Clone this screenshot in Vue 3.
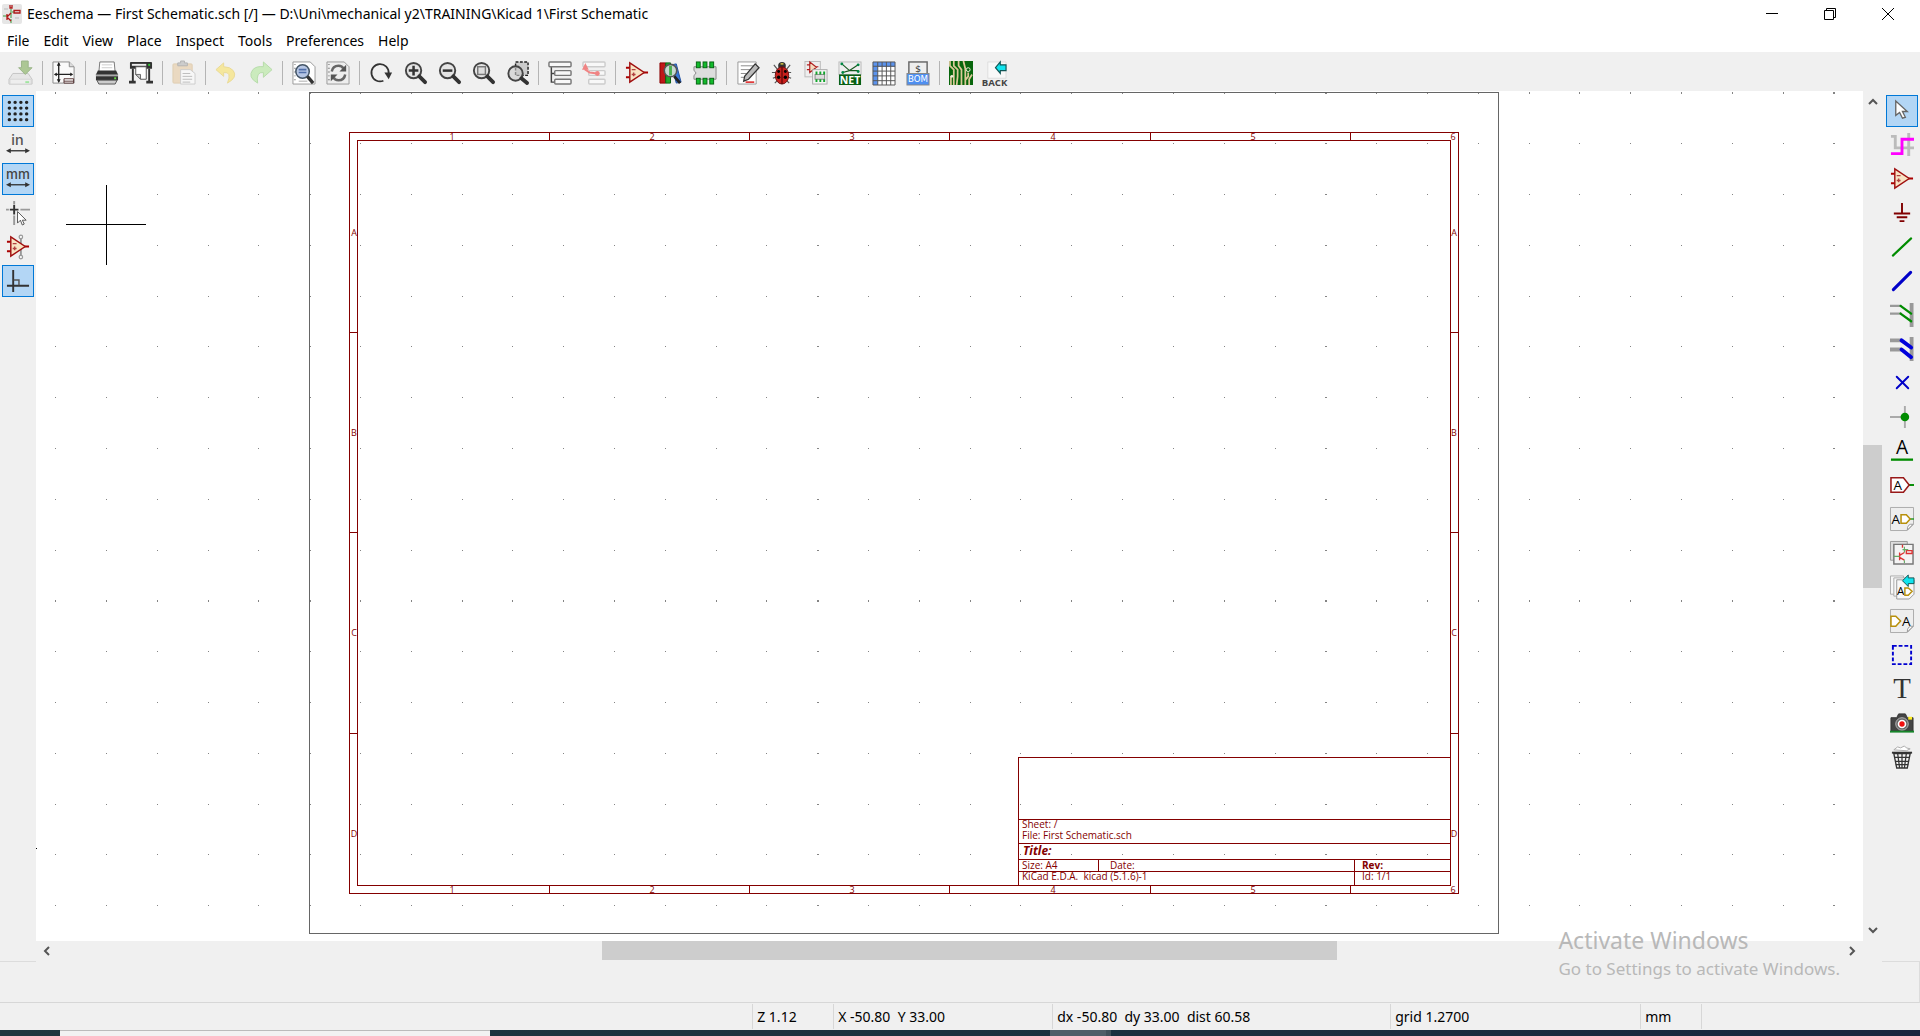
<script setup>
const sheetPaper = '<path d="M1 1H18L23 6V23H1Z" fill="#fafafa" stroke="#8a8a8a"/><path d="M18 1V6H23" fill="#ddd" stroke="#8a8a8a"/>'
const lens = '<circle cx="11" cy="10" r="8" fill="#e4e4e4" stroke="#444" stroke-width="2"/><path d="M17 16L23 22" stroke="#333" stroke-width="4" stroke-linecap="round"/>'
const opamp = '<path d="M1 7H6M1 17H6M19 12H24" stroke="#a00" stroke-width="2"/><path d="M5 2V22L20 12Z" fill="#f8e4c4" stroke="#a01010" stroke-width="1.5"/><path d="M7 9H11M7 14H11M9 12V16" stroke="#b04040" stroke-width="1.5"/>'
const cursor = '<path d="M6 2V17L10 14L13 20L16 19L13 13H18Z" fill="#fff" stroke="#666" stroke-width="1.4"/>'
const corner = '<path d="M0.5 0.5H24.5V18L18 24.5H0.5Z" fill="#eee" stroke="#aaa"/><path d="M24 18Q18 17 18 24Z" fill="#fff" stroke="#999"/>'

const icons = {
  save: '<g opacity=".5"><path d="M4 13H20L24 19V24H0V19Z" fill="#ddd" stroke="#999"/><path d="M1 19H23V24H1Z" fill="#eee" stroke="#bbb"/><path d="M13 0H20V7H24L17 14L10 7H13Z" fill="#6a9f3a" stroke="#477a25"/><path d="M17 22H21" stroke="#5d5" stroke-width="2"/></g>',
  page: sheetPaper + '<path d="M3 14H21M7 2V22" stroke="#222" stroke-width="1.4"/><path d="M2 14L5 12V16ZM22 14L19 12V16ZM7 1L5 5H9ZM7 23L5 19H9Z" fill="#222"/><path d="M12.5 18.5H22.5V23H12.5ZM12.5 21H22.5" fill="#fff" stroke="#533"/>',
  print: '<path d="M5 1H20L21 12H4Z" fill="#fff" stroke="#777"/><path d="M7 4H18M7 7H18" stroke="#ccc"/><path d="M3 10H22L24 14V20H1V14Z" fill="#333"/><path d="M1 15H24" stroke="#aaa" stroke-width="2"/><path d="M2 20H23L21 24H4Z" fill="#ccc" stroke="#555"/><path d="M20 18H22" stroke="#6d4" stroke-width="2"/>',
  plot: '<path d="M1 2Q1 1 2 1H23Q24 1 24 2V8H1Z" fill="#333"/><path d="M3 4H18" stroke="#eee" stroke-width="2"/><path d="M20 4H22" stroke="#3c3" stroke-width="2"/><path d="M4 8V21M21 8V21" stroke="#333" stroke-width="2"/><path d="M0 22H7M18 22H25" stroke="#333" stroke-width="3"/><path d="M7 6H18V19H12L7 14Z" fill="#fff" stroke="#555"/><path d="M7 14H12V19Z" fill="#ccc" stroke="#666"/>',
  paste: '<g opacity=".5"><rect x="1" y="3" width="20" height="20" rx="1" fill="#e6c494" stroke="#d0ac74"/><path d="M6 5V2H9V0H13V2H16V5Z" fill="#aaa" stroke="#777"/><path d="M9 9H19L24 13V24H9Z" fill="#fff" stroke="#aaa"/><path d="M11 13H19M11 16H21M11 19H21M11 22H19" stroke="#888"/></g>',
  undo: '<g opacity=".5"><path d="M9 2L1 9L9 16V12Q18 11 13 23Q24 17 19 10Q16 6 9 6Z" fill="#fbe04c" stroke="#e4c440"/></g>',
  redo: '<g opacity=".5"><path d="M15 1L24 9L15 17V12Q7 11 9 23Q-2 17 4 9Q8 5 15 6Z" fill="#a8e88c" stroke="#7cc864"/></g>',
  find: '<path d="M1 1H19L24 6V24H1Z" fill="#fff" stroke="#999"/><path d="M3 3V22" stroke="#999" stroke-dasharray="1 3" stroke-width="2"/><path d="M7 5H16M7 21H16" stroke="#aaa"/><circle cx="11" cy="11" r="7" fill="#b6c6e4" stroke="#456" stroke-width="1.6"/><path d="M7 9H15M7 12H15" stroke="#5270aa" stroke-width="1.6"/><path d="M16 16L22 23" stroke="#333" stroke-width="3.5"/>',
  replace: '<path d="M1 1H19L24 6V24H1Z" fill="#eee" stroke="#999"/><path d="M3 3V22" stroke="#888" stroke-dasharray="1 3" stroke-width="2"/><path d="M6 11Q7 5 13 5Q17 5 18 8M20 14Q19 20 13 20Q9 20 8 17" fill="none" stroke="#666" stroke-width="2.6"/><path d="M21 4V11H14ZM5 21V14H12Z" fill="#555"/>',
  refresh: '<path d="M15 20.5A9 9 0 1 1 20.5 13" fill="none" stroke="#333" stroke-width="1.8"/><path d="M16 12H24L20.5 19Z" fill="#333"/>',
  zoomIn: lens + '<path d="M6 10H16M11 5V15" stroke="#333" stroke-width="2.6"/>',
  zoomOut: lens + '<path d="M6 10H16" stroke="#333" stroke-width="2.6"/>',
  zoomFit: lens + '<rect x="7" y="6" width="8" height="8" fill="#ddd" stroke="#777" stroke-width="1.5"/>',
  zoomArea: '<path d="M11 1H24V15H11Z" fill="#ccc" stroke="#222" stroke-width="1.5" stroke-dasharray="3 1.5"/><circle cx="11" cy="13" r="7.5" fill="#ccc" fill-opacity=".6" stroke="#444" stroke-width="2"/><path d="M17 18L23 23" stroke="#333" stroke-width="4" stroke-linecap="round"/>',
  tree: '<path d="M3.5 6V22H8M3.5 13H8" fill="none" stroke="#444" stroke-width="1.5"/><g fill="#f8f8f8" stroke="#777" stroke-width="1.5"><rect x="1" y="1" width="23" height="5" rx="1"/><rect x="7" y="10" width="17" height="5" rx="1"/><rect x="7" y="19" width="17" height="5" rx="1"/></g>',
  leave: '<g fill="#f8f8f8" stroke="#ccc" stroke-width="1.5"><rect x="1" y="1" width="23" height="5" rx="1"/><rect x="7" y="10" width="17" height="5" rx="1"/><rect x="7" y="19" width="17" height="5" rx="1"/></g><path d="M16 13L8 12L3.5 9V5" fill="none" stroke="#f08484" stroke-width="2"/><path d="M3.5 2L0 9H7Z" fill="#f08484"/><circle cx="16" cy="13" r="2.5" fill="#f08484"/>',
  opamp,
  library: '<path d="M1 2H7V23H1Z" fill="#c01818" stroke="#800"/><path d="M7 2H12V23H7Z" fill="#22a82c" stroke="#0a6010"/><path d="M13 4L18 3L23 22L18 23Z" fill="#3a78d8" stroke="#1f4fa0"/><circle cx="12" cy="10" r="6.5" fill="#c8d8d0" stroke="#555" stroke-width="1.6"/><path d="M12 5V15" stroke="#4ab050" stroke-width="3"/><path d="M16 16L22 23" stroke="#222" stroke-width="3"/>',
  footprint: '<path d="M1 6H24V19H1V15Q5 12.5 1 10Z" fill="#ddd" stroke="#888"/><g fill="#12bb2c" stroke="#076514"><rect x="3.5" y="1" width="4" height="6"/><rect x="10.5" y="1" width="4" height="6"/><rect x="17.5" y="1" width="4" height="6"/><rect x="3.5" y="18" width="4" height="6"/><rect x="10.5" y="18" width="4" height="6"/><rect x="17.5" y="18" width="4" height="6"/></g>',
  annotate: '<path d="M2 1H21V24H2Z" fill="#fff" stroke="#999"/><path d="M5 5H18M5 9H15M5 13H11M5 17H9" stroke="#888"/><path d="M10 22H19" stroke="#d22" stroke-width="1.6"/><path d="M20 3L24 7L13 19L8 21L9 16Z" fill="#bbb" stroke="#333" stroke-width="1.3"/>',
  bug: '<path d="M4 4L8 9M21 4L17 9M2 12H22M3 18L8 16M22 18L17 16M5 23L9 19M20 23L16 19" stroke="#555" stroke-width="1.2"/><circle cx="12.5" cy="5" r="4" fill="#333"/><path d="M11 3H14" stroke="#dc4" stroke-width="1.5"/><ellipse cx="12.5" cy="15" rx="7" ry="9" fill="#c8201c" stroke="#611"/><path d="M12.5 6V24" stroke="#400"/><circle cx="9" cy="11" r="1.5"/><circle cx="16" cy="11" r="1.5"/><circle cx="9" cy="17" r="1.8"/><circle cx="16" cy="17" r="1.8"/>',
  assign: '<rect x="1" y="0.5" width="16" height="16" fill="#eee" stroke="#bbb"/><path d="M3 4H6M3 9H6M12 6H15M6 1V12L13 6.5Z" fill="#f4dcc0" stroke="#b02020" stroke-width="1.2"/><rect x="9" y="9" width="15" height="15" fill="#f4f4f4" stroke="#aaa"/><rect x="11.5" y="14" width="10" height="5" fill="#ddd" stroke="#888"/><path d="M12 12.5H22M12 20.5H22" stroke="#12a52c" stroke-width="3" stroke-dasharray="2 2"/>',
  net: '<rect x="1" y="1" width="23" height="13" fill="#eee" stroke="#bbb"/><path d="M4 3L12 10L21 4M12 10L5 12M12 10H21" fill="none" stroke="#175a20" stroke-width="1.2"/><g fill="#084"><circle cx="4" cy="3" r="1.5"/><circle cx="21" cy="4" r="1.5"/><circle cx="5" cy="12" r="1.5"/><circle cx="21" cy="11" r="1.5"/></g><rect x="1" y="14" width="23" height="11" fill="#085f14"/><text x="12.5" y="23.5" font-size="11" font-weight="700" font-family="Open Sans, sans-serif" text-anchor="middle" fill="#fff">NET</text>',
  table: '<rect x="1" y="1" width="23" height="24" fill="#fff"/><path d="M1 1H24V6H1ZM1 1H6V25H1Z" fill="#5b93ee"/><path d="M1 1H24V25H1ZM1 5.5H24M1 10.5H24M1 15.5H24M1 20.5H24M6 1V25M10.5 1V25M15 1V25M19.5 1V25" fill="none" stroke="#555"/>',
  bom: '<rect x="3" y="1" width="19" height="13" fill="#eee" stroke="#666" stroke-width="1.5"/><text x="12.5" y="11" font-size="10" font-family="DejaVu Sans, sans-serif" text-anchor="middle" fill="#333">$</text><rect x="1" y="13" width="23" height="12" fill="#4f8ff0" stroke="#888"/><text x="12.5" y="22" font-size="9" font-family="DejaVu Sans, sans-serif" text-anchor="middle" fill="#fff">BOM</text>',
  pcb: '<rect width="25" height="25" fill="#08660c"/><path d="M1 0V5L5 9V25M5 0V5L9 9V16L8 25M10 0V5L13 9V25M15 0L17 8V25M20 12V16L17 20M24 14L21 19V25M2 16V25" fill="none" stroke="#dcc99a" stroke-width="1.8"/><circle cx="20" cy="9" r="2" fill="#08660c" stroke="#eed"/><circle cx="3" cy="16" r="1.5" fill="#eed"/>',
  back: '<path d="M5 1H24V18H5Z" fill="#f8f8f8" stroke="#ddd"/><path d="M13 7L18 1V4H24V10H18V13Z" fill="#10e4ee" stroke="#155" stroke-width="1.2"/><text x="12" y="26" font-size="10" font-weight="700" font-family="Open Sans, sans-serif" text-anchor="middle" fill="#444">BACK</text>',
  grid: '<path d="M3.5 3.5H22M3.5 9.5H22M3.5 15.5H22M3.5 21.5H22" stroke="#222" stroke-width="3.6" stroke-linecap="round" stroke-dasharray="0 6"/>',
  inch: '<text x="12" y="13" font-size="15" font-weight="500" font-family="Inter, sans-serif" text-anchor="middle" fill="#555">in</text><path d="M3 18.5H22" stroke="#333" stroke-width="1.4"/><path d="M0 18.5L5 16V21ZM25 18.5L20 16V21Z" fill="#333"/>',
  mm: '<text x="12.5" y="13" font-size="14" font-weight="500" font-family="Inter, sans-serif" text-anchor="middle" fill="#444">mm</text><path d="M3 18.5H22" stroke="#333" stroke-width="1.4"/><path d="M0 18.5L5 16V21ZM25 18.5L20 16V21Z" fill="#333"/>',
  cross: '<path d="M0 9H3M15 9H25M8.5 0V3M8.5 15V25" stroke="#999" stroke-width="2"/><path d="M4 9H13M8.5 4V14" stroke="#333" stroke-width="2"/><path d="M12 11V23L15 20L17 25L19 24L17 20H21Z" fill="#fff" stroke="#555"/>',
  hidden: '<path d="M15.5 3V22" stroke="#999" stroke-width="2"/>' + opamp + '<g fill="#fff" stroke="#999" stroke-width="1.3"><circle cx="15.5" cy="2" r="1.8"/><circle cx="15.5" cy="23" r="1.8"/></g>',
  ortho: '<path d="M7.5 1V24M1 17.5H24" stroke="#333" stroke-width="2"/><path d="M8 11.5H13.5V17" fill="none" stroke="#555" stroke-width="1.5"/>',
  select: cursor,
  highlight: '<path d="M1 3.5H5.5V15.5H25M19.5 0V24" fill="none" stroke="#bbb" stroke-width="3"/><path d="M1 21.5H12.5V6.5H25" fill="none" stroke="#f0f" stroke-width="3"/>',
  power: '<path d="M12.5 2V13" stroke="#800000" stroke-width="2"/><path d="M4 13H21M7 17H18M10 21H15" stroke="#800000" stroke-width="2"/>',
  wire: '<path d="M3 21.5L22 3.5" stroke="#008c00" stroke-width="2.2" stroke-linecap="round"/>',
  bus: '<path d="M3.5 21.5L21.5 3.5" stroke="#0000c8" stroke-width="3.2" stroke-linecap="round"/>',
  wireEntry: '<path d="M0 3H12M0 11H12" stroke="#999" stroke-width="2.4"/><path d="M22.5 0V25" stroke="#999" stroke-width="4"/><path d="M11 3L22 11M11 11L22 19" stroke="#008c00" stroke-width="2.4" stroke-linecap="round"/>',
  busEntry: '<path d="M0 3.5H12M0 13H12" stroke="#999" stroke-width="4"/><path d="M22.5 0V25" stroke="#999" stroke-width="4"/><path d="M12 3.5L22 11M12 13L22 21" stroke="#0000dc" stroke-width="4" stroke-linecap="round"/>',
  noConnect: '<path d="M7 6L19 18M19 6L7 18" stroke="#0000c8" stroke-width="2" stroke-linecap="round"/>',
  junction: '<path d="M0 12.5H13M15.5 1V24" stroke="#aaa" stroke-width="2"/><circle cx="15.5" cy="12.5" r="4.5" fill="#008c00"/>',
  label: '<text x="12.5" y="16" font-size="20" font-family="Open Sans, sans-serif" text-anchor="middle">A</text><path d="M1 21.5H24" stroke="#008c00" stroke-width="2.4"/>',
  globalLabel: '<path d="M19 12.5H25" stroke="#008c00" stroke-width="2"/><path d="M1 5H14L20 12.5L14 20H1Z" fill="#fff" stroke="#981818" stroke-width="1.6"/><text x="8" y="17.5" font-size="14" font-family="Open Sans, sans-serif" text-anchor="middle">A</text>',
  hierLabel: corner + '<text x="6" y="17.5" font-size="14" font-family="Open Sans, sans-serif" text-anchor="middle">A</text><path d="M20 12.5H25" stroke="#292" stroke-width="1.5"/><path d="M11.5 8H17L21 12.5L17 17H11.5Z" fill="#fff" stroke="#b8900c" stroke-width="1.6"/>',
  sheet: '<path d="M0.5 0.5H18V20H0.5Z" fill="#ddd" stroke="#999"/><path d="M4 3.5H24V24H4Z" fill="#f4f4f4" stroke="#777" stroke-width="1.5"/><path d="M17 10H23V13H17ZM10 12V20M10 15L15 12M10 17L15 20M13 4V7" fill="none" stroke="#d33" stroke-width="1.4"/><path d="M4 16H10M15 12V6M15 20V23M13 9H19" stroke="#6a6" stroke-width="1.2"/>',
  importPin: '<path d="M0.5 1H14V20H0.5Z" fill="#f8f8f8" stroke="#aaa"/><path d="M4 3H18V22H4Z" fill="#f8f8f8" stroke="#aaa"/><path d="M7 5H25V20L20 25H7Z" fill="#f8f8f8" stroke="#999"/><path d="M13 6L19 0V3H25V9H19V12Z" fill="#10e4ee" stroke="#155"/><text x="11" y="21" font-size="12" font-family="Open Sans, sans-serif" text-anchor="middle">A</text><path d="M15.5 13.5H19L23 17L19 21H15.5Z" fill="#fff" stroke="#b8900c" stroke-width="1.5"/>',
  sheetPin: corner + '<path d="M1 7.5H6L11 12.5L6 18H1Z" fill="#fff" stroke="#b8900c" stroke-width="1.6"/><text x="17" y="17.5" font-size="14" font-family="Open Sans, sans-serif" text-anchor="middle">A</text>',
  dashed: '<path d="M3 3H22V22H3Z" fill="none" stroke="#0000d0" stroke-width="2" stroke-dasharray="4 2"/>',
  text: '<text x="12.5" y="22" font-size="30" font-family="Liberation Serif, serif" text-anchor="middle" fill="#333">T</text>',
  image: '<path d="M1 7H7L9 3H16L18 7H24V21H1Z" fill="#444" stroke="#333"/><path d="M19 6H23V9H19Z" fill="#fe2"/><circle cx="12.5" cy="13.5" r="6.5" fill="#666" stroke="#bbb"/><circle cx="12.5" cy="13.5" r="4.5" fill="#fff"/><circle cx="12.5" cy="13.5" r="2.8" fill="#f01010"/><path d="M0 21.5H25" stroke="#16862a" stroke-width="2"/>',
  trash: '<path d="M4 5L8 2L11 3L15 1L17 3L21 4L17 6Z" fill="#fff" stroke="#aaa"/><path d="M2 8H23" stroke="#333" stroke-width="2"/><path d="M4 9L7 24H18L21 9Z" fill="#f4f4f4" stroke="#333" stroke-width="1.4"/><path d="M8 9L10 24M12.5 9V24M17 9L15 24M5 13H20M6 17H19M6 20.5H19" stroke="#333" stroke-width="1.3"/>',
}

const menus = ['File', 'Edit', 'View', 'Place', 'Inspect', 'Tools', 'Preferences', 'Help']
const groups = [
  ['save'], ['page'], ['print', 'plot'], ['paste'], ['undo', 'redo'], ['find', 'replace'],
  ['refresh', 'zoomIn', 'zoomOut', 'zoomFit', 'zoomArea'], ['tree', 'leave'],
  ['opamp', 'library', 'footprint'], ['annotate', 'bug', 'assign', 'net', 'table', 'bom'], ['pcb', 'back'],
]
const leftTools = ['grid', 'inch', 'mm', 'cross', 'hidden', 'ortho']
const leftActive = ['grid', 'mm', 'ortho']
const rightTools = [
  'select', 'highlight', 'opamp', 'power', 'wire', 'bus', 'wireEntry', 'busEntry', 'noConnect', 'junction',
  'label', 'globalLabel', 'hierLabel', 'sheet', 'importPin', 'sheetPin', 'dashed', 'text', 'image', 'trash',
]
const product = 'KiCad E.D.A.  kicad (5.1.6)-1'

const dots = []
for (let r = 0; r < 17; r++) {
  for (let c = 0; c < 36; c++) {
    dots.push({
      x: Math.floor(19.6 + c * 50.81),
      y: Math.round(1.4 + r * 50.8),
      w: c % 10 === 5 ? 2 : 1,
      h: r % 10 === 0 ? 2 : 1,
    })
  }
}
const columns = [1, 2, 3, 4, 5, 6].map((n, i) => ({ n, x: 416 + Math.round(i * 200.2), tick: 513 + Math.round(i * 200.2) }))
const rows = ['A', 'B', 'C', 'D'].map((n, i) => ({ n, y: 142 + Math.round(i * 200.2), tick: 241 + Math.round(i * 200.4) }))
</script>

<template>
  <div class="window">
    <header class="title">
      <svg class="logo" viewBox="0 0 20 20" aria-hidden="true">
        <rect width="20" height="20" rx="2" fill="#e6e6e6" />
        <path d="M9 5V14M1 12H6M10 8H13M9 15V19" stroke="#3a9a3a" fill="none" />
        <path d="M5 10V16M5 13L9 9M5 13L9 17M8 1V4H10V1M12 6.500H18V9H12Z" stroke="#b01818" stroke-width="1.3" fill="none" />
        <path d="M2 5H6M13 14H17" stroke="#bbb" />
      </svg>
      <h1>Eeschema — First Schematic.sch [/] — D:\Uni\mechanical y2\TRAINING\Kicad 1\First Schematic</h1>
      <div class="controls">
        <button aria-label="Minimize"><svg viewBox="0 0 12 12"><path d="M0 5.5H12" /></svg></button>
        <button aria-label="Restore"><svg viewBox="0 0 12 12"><path d="M0.5 2.5H9.5V11.5H0.5ZM2.5 2.5V0.5H11.5V9.5H9.5" /></svg></button>
        <button aria-label="Close"><svg viewBox="0 0 12 12"><path d="M0 0L12 12M12 0L0 12" /></svg></button>
      </div>
    </header>

    <nav class="menu"><button v-for="m in menus" :key="m">{{ m }}</button></nav>

    <div class="toolbar">
      <div v-for="(g, i) in groups" :key="i" class="group">
        <button v-for="name in g" :key="name" class="tool" :aria-label="name">
          <svg viewBox="0 0 25 25" v-html="icons[name]"></svg>
        </button>
      </div>
    </div>

    <main class="work">
      <div class="side">
        <button v-for="name in leftTools" :key="name" class="tool" :class="{ on: leftActive.includes(name) }" :aria-label="name">
          <svg viewBox="0 0 25 25" v-html="icons[name]"></svg>
        </button>
      </div>

      <div class="editor">
        <svg class="canvas" shape-rendering="crispEdges">
          <g fill="#848484">
            <rect v-for="(d, i) in dots" :key="i" :x="d.x" :y="d.y" :width="d.w" :height="d.h" />
          </g>
          <rect x="273.5" y="1.5" width="1189" height="841" fill="none" stroke="#666" />
          <g fill="none" stroke="#840000">
            <rect x="313.5" y="41.5" width="1109" height="761" />
            <rect x="321.5" y="49.5" width="1093" height="745" />
            <path v-for="c in columns.slice(0, 5)" :key="c.n" :d="`M${c.tick}.5 41V49M${c.tick}.5 794V802`" />
            <path v-for="r in rows.slice(0, 3)" :key="r.n" :d="`M313 ${r.tick}.5H321M1414 ${r.tick}.5H1422`" />
            <path d="M982.5 794V666.5H1414M982 728.5H1414M982 752.5H1414M982 768.5H1414M982 780.5H1414M1062.5 768V780M1318.5 768V794" />
          </g>
          <g class="ref">
            <template v-for="c in columns" :key="c.n">
              <text :x="c.x" y="49">{{ c.n }}</text>
              <text :x="c.x" y="802">{{ c.n }}</text>
            </template>
            <template v-for="r in rows" :key="r.n">
              <text x="318" :y="r.y + 3">{{ r.n }}</text>
              <text x="1418" :y="r.y + 3">{{ r.n }}</text>
            </template>
          </g>
          <g class="block">
            <text x="986" y="737">Sheet: /</text>
            <text x="986" y="748">File: First Schematic.sch</text>
            <text x="987" y="764" class="heading">Title:</text>
            <text x="986" y="778">Size: A4</text>
            <text x="1074" y="778">Date:</text>
            <text x="1326" y="778" class="strong">Rev:</text>
            <text x="986" y="789">{{ product }}</text>
            <text x="1326" y="789">Id: 1/1</text>
          </g>
          <path d="M30 133.5H110M70.5 94V174M0 757.5H1" stroke="#000" />
        </svg>
        <div class="vbar">
          <button aria-label="Scroll up"><svg viewBox="0 0 10 10"><path d="M1 7L5 3L9 7" /></svg></button>
          <div class="track"><div class="thumb"></div></div>
          <button aria-label="Scroll down"><svg viewBox="0 0 10 10"><path d="M1 3L5 7L9 3" /></svg></button>
        </div>
        <div class="hbar">
          <button aria-label="Scroll left"><svg viewBox="0 0 10 10"><path d="M7 1L3 5L7 9" /></svg></button>
          <div class="track"><div class="thumb"></div></div>
          <button aria-label="Scroll right"><svg viewBox="0 0 10 10"><path d="M3 1L7 5L3 9" /></svg></button>
        </div>
      </div>

      <div class="side right">
        <button v-for="name in rightTools" :key="name" class="tool" :class="{ on: name === 'select' }" :aria-label="name">
          <svg viewBox="0 0 25 25" v-html="icons[name]"></svg>
        </button>
      </div>
    </main>

    <div class="messages"></div>

    <footer class="status">
      <span class="rest"></span>
      <span class="zoom">Z 1.12</span>
      <span class="pos">X -50.80&nbsp; Y 33.00</span>
      <span class="delta">dx -50.80&nbsp; dy 33.00&nbsp; dist 60.58</span>
      <span class="gridsize">grid 1.2700</span>
      <span class="unit">mm</span>
      <span class="tail"></span>
    </footer>
    <div class="taskbar"><i class="search"></i><i class="running"></i></div>

    <aside class="watermark">
      <strong>Activate Windows</strong>
      <span>Go to Settings to activate Windows.</span>
    </aside>
  </div>
</template>

<style>
body { margin: 0; }
</style>

<style scoped>
.window {
  position: relative;
  display: flex;
  flex-direction: column;
  min-height: 100vh;
  background: #f0f0f0;
  color: #000;
  font: 14px/20px "Noto Sans", "Open Sans", sans-serif;
}
button {
  display: flex;
  align-items: center;
  justify-content: center;
  padding: 0;
  border: 0;
  background: none;
  color: inherit;
  font: inherit;
}
.title { display: flex; align-items: center; height: 28px; padding-right: 3px; background: #fff; }
.logo { width: 20px; height: 20px; margin: 0 5px 0 2px; }
h1 { flex: 1; margin: 0; font-size: 14px; font-weight: 400; line-height: 22px; white-space: nowrap; }
.controls { display: flex; }
.controls button { width: 58px; height: 28px; }
.controls svg { width: 12px; height: 12px; fill: none; stroke: #000; overflow: visible; }
.menu { display: flex; height: 24px; background: #fff; }
.menu button { padding: 2px 7px 0; }
.toolbar { display: flex; align-items: center; box-sizing: border-box; height: 39px; padding: 2px 0 0 4px; }
.group { display: flex; }
.group + .group::before { content: ""; width: 1px; margin: 4px; background: #b4b4b4; }
.tool { box-sizing: border-box; width: 34px; height: 32px; }
.tool svg { width: 24px; height: 24px; overflow: visible; }
.work { flex: 1; display: flex; min-height: 0; }
.side { display: flex; flex-direction: column; gap: 2px; box-sizing: border-box; width: 36px; padding: 4px 2px; border-bottom: 1px solid #dcdcdc; }
.side.right { width: 38px; padding: 4px; }
.side .tool { width: 32px; border: 1px solid transparent; }
.side .on { border-color: #0078d7; background: #b3d6f5; }
.editor { flex: 1; display: grid; grid-template: 1fr 21px / 1fr 19px; min-width: 0; }
.canvas { width: 100%; height: 100%; min-height: 850px; background: #fff; }
.canvas text { fill: #840000; font-family: "Open Sans", sans-serif; white-space: pre; }
.ref text { font-size: 9px; text-anchor: middle; }
.block text { font-size: 10px; }
.canvas .strong { font-weight: 700; }
.canvas .heading { font-size: 12px; font-weight: 700; font-style: italic; }
.vbar, .hbar { display: flex; }
.vbar { flex-direction: column; }
.vbar button { height: 22px; }
.hbar button { width: 22px; }
.hbar { height: 19px; }
.vbar svg, .hbar svg { width: 10px; height: 10px; fill: none; stroke: #555; stroke-width: 2; }
.track { flex: 1; display: flex; }
.vbar .track { flex-direction: column; }
.vbar .track::before { content: ""; flex: 332; }
.vbar .track::after { content: ""; flex: 331; }
.vbar .thumb { flex: 143; background: #cdcdcd; }
.hbar .track::before { content: ""; flex: 544; }
.hbar .track::after { content: ""; flex: 504; }
.hbar .thumb { flex: 735; background: #cdcdcd; }
.messages { height: 40px; border-right: 1px solid #dcdcdc; border-bottom: 1px solid #d7d7d7; }
.status { display: flex; height: 25px; padding: 1px 0; }
.status span { box-sizing: border-box; padding: 3px 0 0 4px; white-space: pre; }
.status span + span { border-left: 1px solid #d7d7d7; }
.status .rest { flex: 753; padding: 0; }
.status .zoom { width: 81px; }
.status .pos { width: 219px; }
.status .delta { width: 338px; }
.status .gridsize { width: 250px; }
.status .unit { width: 61px; }
.status .tail { flex: 218; padding: 0; }
.taskbar { display: flex; height: 6px; background: linear-gradient(90deg, #203640, #1b3040 60%, #1a2540); }
.taskbar i { height: 6px; }
.search { width: 430px; margin-left: 60px; box-sizing: border-box; border-top: 1px solid #bbb; background: #f2f2f2; }
.running { width: 56px; margin-left: 560px; border-right: 5px solid #40505a; background: #4f5e68; }
.watermark {
  position: absolute;
  right: 80px;
  bottom: 54px;
  display: flex;
  flex-direction: column;
  color: #b8b8b8;
  font-size: 17px;
  line-height: 26px;
  white-space: nowrap;
}
.watermark strong { font-size: 23px; font-weight: 400; line-height: 32px; }
</style>
